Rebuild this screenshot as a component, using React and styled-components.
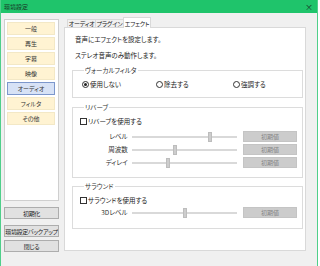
import React from 'react';
import styled, { createGlobalStyle } from 'styled-components';

const Global = createGlobalStyle`
  html, body { margin: 0; padding: 0; background: #ffffff; }
  body {
    font-family: "Noto Sans CJK JP", "Noto Sans", sans-serif;
    font-size: 6.5px;
    font-feature-settings: "palt";
    color: #1b1b1b;
  }
`;

const Window = styled.div`
  width: 316px;
  height: 266px;
  border-left: 1px solid #4fcf8a;
  border-right: 1px solid #4fcf8a;
  display: flex;
  flex-direction: column;
  background: #f0f0f0;
`;

const TitleBar = styled.div`
  height: 13px;
  background: #1fc46b;
  display: flex;
  align-items: center;
  justify-content: space-between;
  padding: 0 4px 0 3px;
  color: #173526;
  font-size: 6px;
`;

const Close = styled.span`
  font-size: 8px;
  color: #173526;
`;

const Body = styled.div`
  flex: 1;
  display: flex;
  padding: 4px 0 0 3px;
`;

const Side = styled.div`
  width: 55px;
  display: flex;
  flex-direction: column;
  padding-top: 2px;
`;

const NavBox = styled.div`
  height: 182px;
  box-sizing: border-box;
  background: #ffffff;
  border: 1px solid #cfcfcf;
  padding: 2px 0 0 2px;
  display: flex;
  flex-direction: column;
  gap: 2px;
`;

const NavItem = styled.div`
  width: 48px;
  height: 13px;
  box-sizing: border-box;
  display: flex;
  align-items: center;
  justify-content: center;
  background: ${p => (p.$active ? '#d7e2f6' : '#fff3d2')};
  border: 1px solid ${p => (p.$active ? '#7c97cc' : '#f3e8c6')};
  color: #333;
  font-size: 6px;
`;

const SideButton = styled.div`
  height: 12px;
  margin-top: ${p => p.$gap}px;
  box-sizing: border-box;
  display: flex;
  align-items: center;
  justify-content: center;
  background: #e1e1e1;
  border: 1px solid #adadad;
  color: #222;
  font-size: 6px;
  letter-spacing: -0.3px;
  white-space: nowrap;
  overflow: hidden;
`;

const Main = styled.div`
  margin-left: 5px;
  width: 242px;
  display: flex;
  flex-direction: column;
`;

const Tabs = styled.div`
  display: flex;
  align-items: flex-end;
  height: 11px;
  padding-left: 3px;
`;

const Tab = styled.div`
  width: ${p => (p.$active ? 28 : 29)}px;
  height: ${p => (p.$active ? 11 : 9)}px;
  box-sizing: border-box;
  display: flex;
  align-items: center;
  justify-content: center;
  background: ${p => (p.$active ? '#ffffff' : '#f0f0f0')};
  border: 1px solid #d9d9d9;
  border-bottom: ${p => (p.$active ? 'none' : '1px solid #d9d9d9')};
  margin-left: ${p => (p.$first ? 0 : -1)}px;
  position: relative;
  z-index: ${p => (p.$active ? 1 : 0)};
  font-size: 6px;
  letter-spacing: -0.2px;
  white-space: nowrap;
`;

const Panel = styled.div`
  height: 224px;
  margin-top: -1px;
  box-sizing: border-box;
  background: #ffffff;
  border: 1px solid #d9d9d9;
  padding: 6px 2px 0 7px;
  display: flex;
  flex-direction: column;
`;

const Line = styled.div`
  height: 10px;
  line-height: 10px;
  margin-left: 3px;
  margin-bottom: ${p => p.$mb || 0}px;
`;

const Group = styled.fieldset`
  margin: ${p => p.$mt}px 0 0 0;
  height: ${p => p.$h}px;
  box-sizing: border-box;
  border: 1px solid #dcdcdc;
  padding: 0 5px 0 7px;
  min-width: 0;
`;

const Legend = styled.legend`
  padding: 0 1px;
  margin-left: 4px;
  line-height: 8px;
  color: #333;
`;

const RadioRow = styled.div`
  display: grid;
  grid-template-columns: 74px 77px 1fr;
  margin-top: 5px;
  padding-left: 2px;
`;

const Option = styled.div`
  display: flex;
  align-items: center;
  gap: 1px;
  white-space: nowrap;
`;

const Radio = styled.span`
  width: 5px;
  height: 5px;
  border: 1px solid #333;
  border-radius: 50%;
  display: inline-flex;
  align-items: center;
  justify-content: center;
  &::after {
    content: '';
    width: 3px;
    height: 3px;
    border-radius: 50%;
    background: ${p => (p.$on ? '#222' : 'transparent')};
  }
`;

const CheckRow = styled.div`
  display: flex;
  align-items: center;
  gap: 1px;
  margin-top: ${p => p.$mt}px;
`;

const Box = styled.span`
  width: 5px;
  height: 5px;
  border: 1px solid #333;
  background: #fff;
`;

const SliderRow = styled.div`
  display: flex;
  align-items: center;
  height: 12px;
  margin-top: ${p => p.$mt}px;
`;

const SliderLabel = styled.div`
  width: 48px;
  text-align: right;
  color: #333;
`;

const Track = styled.div`
  width: 106px;
  height: 2px;
  background: #d9d9d9;
  margin: 2px 6px 0 4px;
  position: relative;
`;

const Thumb = styled.span`
  position: absolute;
  top: -4px;
  width: 4px;
  height: 10px;
  margin-left: -2px;
  background: #cdcdcd;
  border: 0.5px solid #bdbdbd;
  box-sizing: border-box;
`;

const ResetButton = styled.div`
  width: 54px;
  height: 11px;
  box-sizing: border-box;
  display: flex;
  align-items: center;
  justify-content: center;
  background: #cccccc;
  border: 1px solid #c4c4c4;
  color: #858585;
  font-size: 6px;
`;

const navItems = ['一般', '再生', '字幕', '映像', 'オーディオ', 'フィルタ', 'その他'];

function Slider({ label, pos, mt }) {
  return (
    <SliderRow $mt={mt}>
      <SliderLabel>{label}</SliderLabel>
      <Track>
        <Thumb style={{ left: `${pos}%` }} />
      </Track>
      <ResetButton>初期値</ResetButton>
    </SliderRow>
  );
}

export default function App() {
  return (
    <>
      <Global />
      <Window>
        <TitleBar>
          <span>環境設定</span>
          <Close>×</Close>
        </TitleBar>
        <Body>
          <Side>
            <NavBox>
              {navItems.map(n => (
                <NavItem key={n} $active={n === 'オーディオ'}>{n}</NavItem>
              ))}
            </NavBox>
            <SideButton $gap={6}>初期化</SideButton>
            <SideButton $gap={6}>環境設定バックアップ</SideButton>
            <SideButton $gap={3}>閉じる</SideButton>
          </Side>
          <Main>
            <Tabs>
              <Tab $first>オーディオ</Tab>
              <Tab>プラグイン</Tab>
              <Tab $active>エフェクト</Tab>
            </Tabs>
            <Panel>
              <Line $mb={6}>音声にエフェクトを設定します。</Line>
              <Line>ステレオ音声のみ動作します。</Line>
              <Group $mt={6} $h={32}>
                <Legend>ヴォーカルフィルタ</Legend>
                <RadioRow>
                  <Option><Radio $on />使用しない</Option>
                  <Option><Radio />除去する</Option>
                  <Option><Radio />強調する</Option>
                </RadioRow>
              </Group>
              <Group $mt={5} $h={75}>
                <Legend>リバーブ</Legend>
                <CheckRow $mt={5}><Box />リバーブを使用する</CheckRow>
                <Slider label="レベル" pos={74} mt={4} />
                <Slider label="周波数" pos={41} mt={1} />
                <Slider label="ディレイ" pos={34} mt={1} />
              </Group>
              <Group $mt={4} $h={47}>
                <Legend>サラウンド</Legend>
                <CheckRow $mt={5}><Box />サラウンドを使用する</CheckRow>
                <Slider label="3Dレベル" pos={50} mt={1} />
              </Group>
            </Panel>
          </Main>
        </Body>
      </Window>
    </>
  );
}
